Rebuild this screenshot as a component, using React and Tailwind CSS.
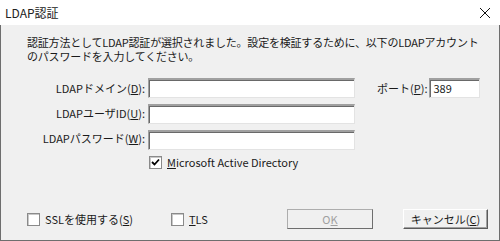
import React from "react";

const font = { fontFamily: '"Noto Sans CJK JP", "Liberation Sans", sans-serif' };

function Field({ w }) {
  return (
    <div
      className={`h-[20px] ${w} bg-white border-t-2 border-l border-[#a0a0a0] border-b border-r border-b-[#e3e3e3] border-r-[#e3e3e3] shadow-[inset_1px_1px_0_#696969]`}
    />
  );
}

function Check({ checked }) {
  return (
    <div className="w-[13px] h-[13px] bg-white border border-[#8a8a8a] shadow-[inset_1px_1px_0_#c8c8c8] flex items-center justify-center">
      {checked && (
        <svg width="9" height="9" viewBox="0 0 9 9">
          <path d="M1 4 L3.5 6.5 L8 1.5" stroke="#000" strokeWidth="1.8" fill="none" />
        </svg>
      )}
    </div>
  );
}

export default function App() {
  return (
    <div className="w-[500px] h-[241px] flex flex-col text-[11px] text-[#1a1a1a] bg-white" style={font}>
      <div className="h-[25px] flex items-center justify-between pl-[5px] pr-[9px] bg-white">
        <span className="text-[12px] text-[#222]">LDAP認証</span>
        <svg width="12" height="12" viewBox="0 0 12 12">
          <path d="M1 1 L11 11 M11 1 L1 11" stroke="#111" strokeWidth="1" />
        </svg>
      </div>
      <div className="flex-1 bg-[#f0f0f0] border-l border-r border-b border-[#6e6e6e] flex flex-col pl-[26px] pt-[10px]">
        <div className="leading-[14px] tracking-[-0.2px]">
          <div className="h-[14px]">認証方法としてLDAP認証が選択されました。設定を検証するために、以下のLDAPアカウント</div>
          <div className="h-[14px]">のパスワードを入力してください。</div>
        </div>
        <div className="flex mt-[15px]">
          <div className="flex flex-col items-end w-[118px] pt-[4px] gap-[12px] leading-[13px]">
            <span>LDAPドメイン(<u>D</u>):</span>
            <span>LDAPユーザID(<u>U</u>):</span>
            <span>LDAPパスワード(<u>W</u>):</span>
          </div>
          <div className="flex flex-col ml-[3px] gap-[6px]">
            <Field w="w-[207px]" />
            <Field w="w-[207px]" />
            <Field w="w-[207px]" />
            <div className="flex items-center ml-[1px] gap-[5px] leading-[13px]">
              <Check checked />
              <span><u>M</u>icrosoft Active Directory</span>
            </div>
          </div>
          <div className="flex items-start ml-[22px]">
            <span className="pt-[4px] leading-[13px]">ポート(<u>P</u>):</span>
            <div className="ml-[2px] h-[20px] w-[51px] bg-white border-t-2 border-l border-[#a0a0a0] border-b border-r border-b-[#e3e3e3] border-r-[#e3e3e3] shadow-[inset_1px_1px_0_#696969] pl-[3px] leading-[16px]">
              389
            </div>
          </div>
        </div>
        <div className="flex items-center mt-auto mb-[11px]">
          <div className="flex items-center gap-[5px] w-[144px]">
            <Check />
            <span>SSLを使用する(<u>S</u>)</span>
          </div>
          <div className="flex items-center gap-[5px] w-[116px]">
            <Check />
            <span><u>T</u>LS</span>
          </div>
          <div className="w-[86px] h-[20px] border border-[#adadad] border-b-[#6e6e6e] border-r-[#6e6e6e] bg-[#f0f0f0] flex items-center justify-center text-[#a0a0a0]">
            O<u>K</u>
          </div>
          <div className="ml-[30px] w-[85px] h-[20px] border border-white border-b-[#5a5a5a] border-r-[#5a5a5a] shadow-[inset_-1px_-1px_0_#a0a0a0] bg-[#f0f0f0] flex items-center justify-center">
            キャンセル(<u>C</u>)
          </div>
        </div>
      </div>
    </div>
  );
}
